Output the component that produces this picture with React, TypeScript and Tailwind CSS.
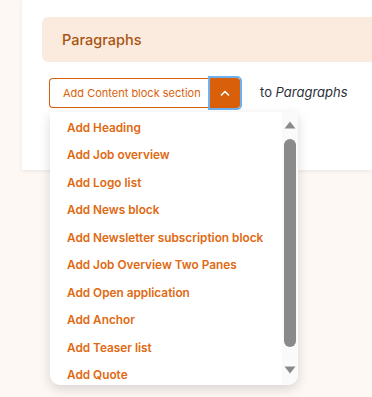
const items = [
    'Add Heading',
    'Add Job overview',
    'Add Logo list',
    'Add News block',
    'Add Newsletter subscription block',
    'Add Job Overview Two Panes',
    'Add Open application',
    'Add Anchor',
    'Add Teaser list',
    'Add Quote',
];

function ScrollBar() {
    return (
        <div className="absolute right-0 top-0 bottom-0 flex w-[16px] flex-col items-center bg-[#fafafa] pt-[9px]">
            <svg width="12" height="8" viewBox="0 0 12 8">
                <path d="M6 0.5 L11.5 7.5 L0.5 7.5 Z" fill="#8a8a8a" />
            </svg>
            <div className="mt-[10px] h-[208px] w-[12px] rounded-full bg-[#8a8a8a]" />
            <svg className="mt-[19px]" width="12" height="8" viewBox="0 0 12 8">
                <path d="M0.5 0.5 L11.5 0.5 L6 7.5 Z" fill="#8a8a8a" />
            </svg>
        </div>
    );
}

function App() {
    return (
        <div className="h-[397px] w-[372px] overflow-hidden bg-[#fdf8f4] pl-[22px] font-['Inter',sans-serif]">
            <div className="relative h-[170px] bg-white pl-[20px] pt-[17px] shadow-[0_1px_4px_rgba(0,0,0,0.08)]">
                <div className="flex h-[45px] items-center rounded-l-md bg-[#fbebdf] pl-[20px]">
                    <h3 className="text-[14.5px] font-medium text-[#a9530f]">Paragraphs</h3>
                </div>

                <div className="mt-[16px] flex items-center">
                    <div className="relative ml-[7px] flex h-[30px] items-stretch">
                        <button className="w-[161px] rounded-l-[4px] border border-r-0 border-[#d95f0b] bg-white pl-[13px] text-left text-[11px] text-[#d95f0b]">
                            Add Content block section
                        </button>
                        <button className="flex w-[30px] items-center justify-center rounded-r-[3px] bg-[#d95f0b] outline outline-2 outline-[#6fb1f0]">
                            <svg width="10" height="6" viewBox="0 0 10 6" fill="none">
                                <path d="M1.5 5 L5 1.5 L8.5 5" stroke="white" strokeWidth="1.6" strokeLinecap="round" strokeLinejoin="round" />
                            </svg>
                        </button>

                        <div className="absolute left-[1px] top-[34px] z-10 h-[273px] w-[248px] overflow-hidden rounded-b-[10px] bg-white shadow-[0_4px_12px_rgba(0,0,0,0.15)]">
                            <ul className="pt-[3px] pr-[16px]">
                                {items.map((label) => (
                                    <li
                                        key={label}
                                        className="flex h-[27.5px] items-center pl-[17px] text-[11.8px] font-semibold text-[#e06a12]"
                                    >
                                        {label}
                                    </li>
                                ))}
                            </ul>
                            <ScrollBar />
                        </div>
                    </div>
                    <span className="ml-[20px] text-[13px] text-[#2b2f3a]">
                        to <em>Paragraphs</em>
                    </span>
                </div>
            </div>
        </div>
    );
}

export default App;
